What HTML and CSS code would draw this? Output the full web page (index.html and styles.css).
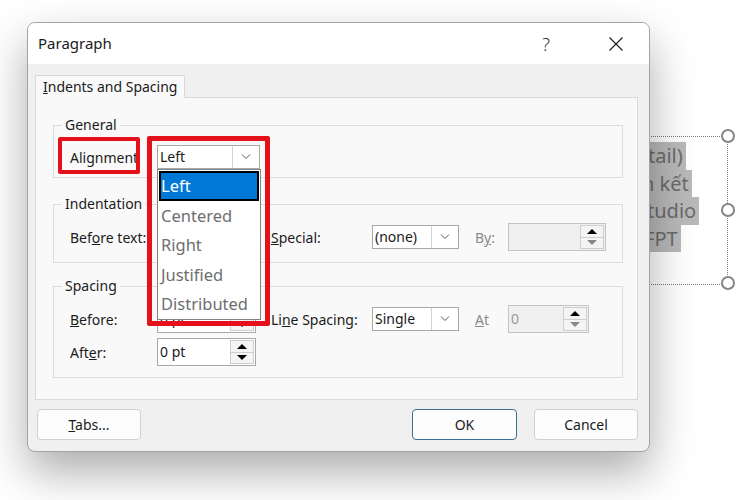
FILE: index.html
```html
<!DOCTYPE html>
<html>

<head>
    <meta charset="UTF-8">
    <title>Paragraph</title>
    <link rel="stylesheet" href="styles.css">
</head>
<body>
    <div class="slide-text">
        <span class="line l1">tail)</span>
        <span class="line l2">n kết</span>
        <span class="line l3">tudio</span>
        <span class="line l4">FPT</span>
    </div>
    <div class="frame"></div>
    <div class="handle h1"></div>
    <div class="handle h2"></div>
    <div class="handle h3"></div>

    <div class="dialog">
        <div class="titlebar">
            <span class="title">Paragraph</span>
            <span class="help">?</span>
            <svg class="close" width="14" height="14" viewBox="0 0 14 14">
                <path d="M0.5 0.5L13.5 13.5M13.5 0.5L0.5 13.5" stroke="#222" stroke-width="1.2" fill="none"/>
            </svg>
        </div>

        <div class="content">
            <div class="tabs">
                <div class="tab"><u>I</u>ndents and Spacing</div>
            </div>
            <div class="panel">
                <fieldset class="group general">
                    <legend>General</legend>
                    <div class="grid">
                        <label>Alignment</label>
                        <div class="select w-align">
                            <span class="val">Left</span>
                            <span class="drop"><svg width="10" height="6" viewBox="0 0 10 6"><path d="M1 0.5l4 4 4-4" fill="none" stroke="#555"/></svg></span>
                        </div>
                    </div>
                </fieldset>

                <fieldset class="group indentation">
                    <legend>Indentation</legend>
                    <div class="grid">
                        <label>Bef<u>o</u>re text:</label>
                        <div class="spin w-pt">
                            <span class="val"></span>
                            <span class="btns"><i class="up"></i><i class="down"></i></span>
                        </div>
                        <label><u>S</u>pecial:</label>
                        <div class="select w-sel">
                            <span class="val">(none)</span>
                            <span class="drop"><svg width="10" height="6" viewBox="0 0 10 6"><path d="M1 0.5l4 4 4-4" fill="none" stroke="#555"/></svg></span>
                        </div>
                        <label class="off">B<u>y</u>:</label>
                        <div class="spin off w-by">
                            <span class="val"></span>
                            <span class="btns"><i class="up"></i><i class="down"></i></span>
                        </div>
                    </div>
                </fieldset>

                <fieldset class="group spacing">
                    <legend>Spacing</legend>
                    <div class="grid">
                        <label><u>B</u>efore:</label>
                        <div class="spin w-pt">
                            <span class="val">0 pt</span>
                            <span class="btns"><i class="up"></i><i class="down"></i></span>
                        </div>
                        <label>Li<u>n</u>e Spacing:</label>
                        <div class="select w-sel">
                            <span class="val">Single</span>
                            <span class="drop"><svg width="10" height="6" viewBox="0 0 10 6"><path d="M1 0.5l4 4 4-4" fill="none" stroke="#555"/></svg></span>
                        </div>
                        <label class="off"><u>A</u>t</label>
                        <div class="spin off w-at">
                            <span class="val">0</span>
                            <span class="btns"><i class="up"></i><i class="down"></i></span>
                        </div>

                        <label>Aft<u>e</u>r:</label>
                        <div class="spin w-pt">
                            <span class="val">0 pt</span>
                            <span class="btns"><i class="up"></i><i class="down"></i></span>
                        </div>
                    </div>
                </fieldset>
            </div>

            <div class="buttons">
                <button class="btn tabs-btn"><u>T</u>abs...</button>
                <button class="btn ok">OK</button>
                <button class="btn cancel">Cancel</button>
            </div>
        </div>

        <!-- open dropdown of Alignment -->
        <ul class="dropdown">
            <li class="active">Left</li>
            <li>Centered</li>
            <li>Right</li>
            <li>Justified</li>
            <li>Distributed</li>
        </ul>

        <!-- red markers -->
        <div class="mark mark-label"></div>
        <div class="mark mark-list"></div>
    </div>
</body>

</html>
```

FILE: styles.css
```css
body {
    margin: 0;
    padding: 22px 0 0 27px;
    width: 750px;
    height: 500px;
    box-sizing: border-box;
    position: relative;
    overflow: hidden;
    background: #fff;
    font-family: "Noto Sans", "Segoe UI", sans-serif;
    color: #1b1b1b;
}

/* slide behind the dialog */
.slide-text {
    position: absolute;
    left: 630px;
    top: 142px;
    font-size: 20px;
    line-height: 27.5px;
    color: #6b6b6b;
    z-index: 1;
}

.slide-text .line {
    display: block;
    width: fit-content;
    background: #b9b9b9;
    padding-right: 3px;
}

.slide-text .l1 { padding-left: 18px; }
.slide-text .l2 { padding-left: 12px; }
.slide-text .l3 { padding-left: 17px; }
.slide-text .l4 { padding-left: 14px; }

.frame {
    position: absolute;
    left: 560px;
    top: 136px;
    width: 167px;
    height: 147px;
    border: 1px dotted #7a7a7a;
    border-left: none;
    z-index: 1;
}

.handle {
    position: absolute;
    left: 721px;
    width: 10px;
    height: 10px;
    border: 2px solid #858585;
    border-radius: 50%;
    background: #fff;
    z-index: 1;
}

.h1 { top: 129px; }
.h2 { top: 203px; }
.h3 { top: 276px; }

/* dialog */
.dialog {
    position: relative;
    z-index: 2;
    width: 623px;
    box-sizing: border-box;
    border: 1px solid #a3a3a3;
    border-radius: 8px;
    background: #f0f0f0;
    box-shadow: 0 20px 45px rgba(0, 0, 0, 0.33);
}

.titlebar {
    height: 41px;
    display: flex;
    align-items: center;
    padding-left: 10px;
    background: #fff;
    border-radius: 7px 7px 0 0;
}

.title {
    flex: 1;
    font-size: 15px;
    margin-top: -2px;
}

.help {
    width: 20px;
    text-align: center;
    font-size: 18px;
    font-weight: 300;
    color: #333;
    margin-right: 53px;
}

.close {
    margin-right: 26px;
}

.content {
    padding: 11px 11px 11px 7px;
}

.tabs {
    display: flex;
}

.tab {
    position: relative;
    z-index: 1;
    height: 23px;
    box-sizing: border-box;
    margin-bottom: -1px;
    padding: 0 7px;
    border: 1px solid #d9d9d9;
    border-bottom: none;
    background: #f9f9f9;
    font-size: 14px;
    line-height: 21px;
}

.panel {
    border: 1px solid #d9d9d9;
    background: #f9f9f9;
    padding: 18px 14px 21px 17px;
}

.group {
    margin: 0;
    padding: 0 14px 0 8px;
    border: 1px solid #dcdcdc;
    min-width: 0;
}

.group legend {
    padding: 0 3px;
    font-size: 14px;
    line-height: 18px;
}

.grid {
    display: grid;
    grid-template-columns: 87px 114px 101px 103px 33px 1fr;
    align-items: center;
    padding-left: 8px;
    font-size: 14px;
}

.general .grid {
    grid-auto-rows: 24px;
    padding-top: 11px;
    padding-bottom: 8px;
}

.indentation {
    margin-top: 17px;
}

.spacing {
    margin-top: 14px;
}

.indentation .grid,
.spacing .grid {
    grid-auto-rows: 28px;
    row-gap: 5px;
    padding-top: 10px;
    padding-bottom: 11px;
}

label.off {
    color: #8a8a8a;
}

/* combo box */
.select {
    display: flex;
    height: 24px;
    box-sizing: border-box;
    border: 1px solid #a8a8a8;
    background: #fff;
}

.select .val {
    flex: 1;
    padding-left: 2px;
    line-height: 21px;
}

.select .drop {
    width: 26px;
    border-left: 1px solid #d4d4d4;
    display: flex;
    align-items: center;
    justify-content: center;
}

.w-align { width: 103px; }
.w-sel { width: 87px; }

/* spin box */
.spin {
    display: flex;
    height: 28px;
    box-sizing: border-box;
    border: 1px solid #a8a8a8;
    background: #fff;
}

.spin .val {
    flex: 1;
    padding-left: 2px;
    line-height: 25px;
}

.spin .btns {
    width: 22px;
    margin: 1px;
    display: flex;
    flex-direction: column;
    border: 1px solid #cfcfcf;
    background: #f4f4f4;
}

.spin .btns i {
    flex: 1;
    display: flex;
    align-items: center;
    justify-content: center;
}

.spin .btns i + i {
    border-top: 1px solid #cfcfcf;
}

.spin .up::before {
    content: "";
    border-left: 5px solid transparent;
    border-right: 5px solid transparent;
    border-bottom: 5px solid #000;
}

.spin .down::before {
    content: "";
    border-left: 5px solid transparent;
    border-right: 5px solid transparent;
    border-top: 5px solid #000;
}

.spin.off {
    background: #f0f0f0;
    border-color: #c4c4c4;
    color: #9a9a9a;
}

.spin.off .down::before {
    border-top-color: #888;
}

.w-pt { width: 99px; }
.w-by { width: 98px; }
.w-at { width: 81px; }

/* buttons */
.buttons {
    display: flex;
    margin-top: 9px;
}

.btn {
    height: 31px;
    width: 104px;
    box-sizing: border-box;
    border: 1px solid #d0d0d0;
    border-radius: 4px;
    background: #fdfdfd;
    font-family: inherit;
    font-size: 14px;
    color: #1b1b1b;
    padding: 0;
}

.tabs-btn {
    margin-left: 2px;
}

.ok {
    margin-left: auto;
    width: 105px;
    border-color: #3d6f95;
}

.cancel {
    margin-left: 17px;
}

/* open list */
.dropdown {
    position: absolute;
    left: 129px;
    top: 146px;
    width: 104px;
    box-sizing: border-box;
    margin: 0;
    padding: 1px 1px 0;
    list-style: none;
    border: 1px solid #828282;
    background: #fff;
}

.dropdown li {
    height: 29.6px;
    box-sizing: border-box;
    padding-left: 2px;
    line-height: 29px;
    font-size: 16.5px;
    color: #6e6e6e;
}

.dropdown li.active {
    background: #0078d7;
    border: 2px solid #000;
    padding-left: 0;
    line-height: 25px;
    color: #fff;
}

.mark {
    position: absolute;
    box-sizing: border-box;
    border: 4px solid #e4101a;
    border-radius: 2px;
}

.mark-label {
    left: 30px;
    top: 114px;
    width: 82px;
    height: 37px;
}

.mark-list {
    left: 119px;
    top: 113px;
    width: 123px;
    height: 190px;
    border-width: 5px;
}
```
